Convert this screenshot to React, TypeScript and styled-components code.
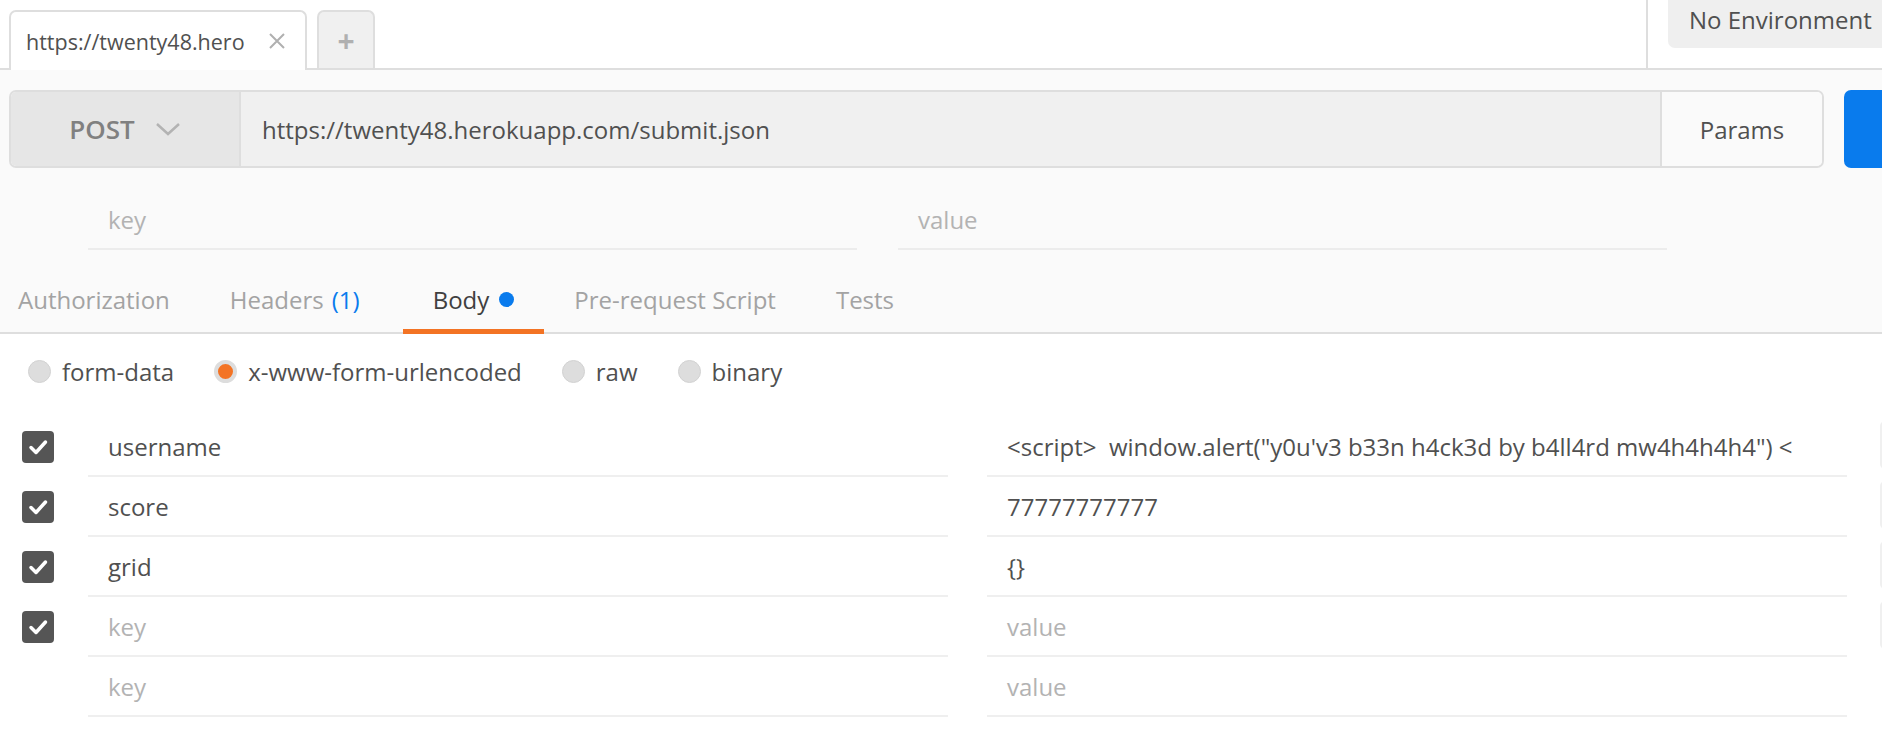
import styled, { createGlobalStyle } from 'styled-components';

const GlobalStyle = createGlobalStyle`
    html, body {
        margin: 0;
        padding: 0;
        background: #fafafa;
        font-family: "Open Sans", "Liberation Sans", sans-serif;
        overflow: hidden;
    }
    * { box-sizing: border-box; }
`;

type Row = { key: string; value: string; checked: boolean; placeholder?: boolean };

const rows: Row[] = [
    { key: 'username', value: '<script>  window.alert("y0u\'v3 b33n h4ck3d by b4ll4rd mw4h4h4h4") <', checked: true },
    { key: 'score', value: '77777777777', checked: true },
    { key: 'grid', value: '{}', checked: true },
    { key: 'key', value: 'value', checked: true, placeholder: true },
    { key: 'key', value: 'value', checked: false, placeholder: true },
];

const tabs = ['Authorization', 'Headers', 'Body', 'Pre-request Script', 'Tests'];
const bodyModes = ['form-data', 'x-www-form-urlencoded', 'raw', 'binary'];

const App = () => {
    return (
        <Page>
            <GlobalStyle />
            <TabBar>
                <RequestTab>
                    <TabTitle>https://twenty48.hero</TabTitle>
                    <svg width="18" height="18" viewBox="0 0 18 18">
                        <path d="M2 2 L16 16 M16 2 L2 16" stroke="#b0b0b0" strokeWidth="2" fill="none" />
                    </svg>
                </RequestTab>
                <AddTab>+</AddTab>
                <Spacer />
                <EnvArea>
                    <EnvSelect>No Environment</EnvSelect>
                </EnvArea>
            </TabBar>

            <UrlRow>
                <UrlBar>
                    <Method>
                        <span>POST</span>
                        <svg width="26" height="14" viewBox="0 0 26 14">
                            <polyline points="2,2 13,12 24,2" stroke="#b3b3b3" strokeWidth="2.5" fill="none" />
                        </svg>
                    </Method>
                    <UrlInput>https://twenty48.herokuapp.com/submit.json</UrlInput>
                    <ParamsButton>Params</ParamsButton>
                </UrlBar>
                <SendButton>Send</SendButton>
            </UrlRow>

            <ParamRow>
                <ParamCell>key</ParamCell>
                <ParamCell>value</ParamCell>
            </ParamRow>

            <TabsRow>
                {tabs.map((t) => (
                    <TabItem key={t} $active={t === 'Body'}>
                        {t}
                        {t === 'Headers' && <Count>(1)</Count>}
                        {t === 'Body' && <Dot />}
                    </TabItem>
                ))}
            </TabsRow>

            <BodyPanel>
                <RadioRow>
                    {bodyModes.map((m) => (
                        <RadioItem key={m}>
                            <Radio $on={m === 'x-www-form-urlencoded'} />
                            {m}
                        </RadioItem>
                    ))}
                </RadioRow>
                <Table>
                    {rows.map((r, i) => (
                        <DataRow key={i}>
                            <CheckCell>
                                {r.checked && (
                                    <CheckBox>
                                        <svg width="32" height="32" viewBox="0 0 32 32">
                                            <polyline points="9,16.5 14,21.5 23.5,11" stroke="#fff" strokeWidth="3.5" fill="none" strokeLinecap="round" strokeLinejoin="round" />
                                        </svg>
                                    </CheckBox>
                                )}
                            </CheckCell>
                            <Cell $muted={r.placeholder}>{r.key}</Cell>
                            <Cell $muted={r.placeholder}>{r.value}</Cell>
                            {i < 4 && <RowEdge />}
                        </DataRow>
                    ))}
                </Table>
            </BodyPanel>
        </Page>
    );
};
export default App;

const Page = styled.div`
    width: 1882px;
    height: 730px;
    overflow: hidden;
    background: #fafafa;
    color: #505050;
    font-size: 24px;
`;

const TabBar = styled.div`
    height: 70px;
    display: flex;
    align-items: flex-end;
    padding-left: 9px;
    background: #fff;
    border-bottom: 2px solid #dedede;
`;

const RequestTab = styled.div`
    width: 298px;
    height: 60px;
    margin-bottom: -2px;
    flex-shrink: 0;
    display: flex;
    align-items: center;
    justify-content: space-between;
    padding: 0 19px 0 15px;
    background: #fff;
    border: 2px solid #dedede;
    border-bottom: none;
    border-radius: 7px 7px 0 0;
`;

const TabTitle = styled.span`
    font-size: 21.5px;
    color: #505050;
`;

const AddTab = styled.div`
    width: 58px;
    height: 58px;
    margin-left: 10px;
    flex-shrink: 0;
    display: flex;
    align-items: center;
    justify-content: center;
    background: #f0f0f0;
    border: 2px solid #dedede;
    border-bottom: none;
    border-radius: 7px 7px 0 0;
    color: #b0b0b0;
    font-size: 30px;
    font-weight: 700;
`;

const Spacer = styled.div`
    flex: 1;
`;

const EnvArea = styled.div`
    align-self: stretch;
    flex-shrink: 0;
    border-left: 2px solid #dedede;
    padding-left: 20px;
    width: 236px;
`;

const EnvSelect = styled.div`
    height: 58px;
    margin-top: -10px;
    display: flex;
    align-items: center;
    padding-left: 21px;
    background: #efefef;
    border-radius: 0 0 0 7px;
    white-space: nowrap;
    color: #505050;
`;

const UrlRow = styled.div`
    display: flex;
    margin-top: 20px;
    padding-left: 9px;
    height: 78px;
`;

const UrlBar = styled.div`
    width: 1815px;
    flex-shrink: 0;
    display: flex;
    border: 2px solid #dedede;
    border-radius: 7px;
    overflow: hidden;
`;

const Method = styled.div`
    width: 230px;
    flex-shrink: 0;
    display: flex;
    align-items: center;
    justify-content: center;
    gap: 20px;
    background: #e6e6e6;
    border-right: 2px solid #dedede;
    font-size: 26px;
    font-weight: 600;
    color: #808080;
`;

const UrlInput = styled.div`
    flex: 1;
    display: flex;
    align-items: center;
    padding-left: 21px;
    background: #f0f0f0;
    color: #505050;
`;

const ParamsButton = styled.div`
    width: 162px;
    flex-shrink: 0;
    display: flex;
    align-items: center;
    justify-content: center;
    background: #fafafa;
    border-left: 2px solid #dedede;
    color: #505050;
`;

const SendButton = styled.div`
    margin-left: 20px;
    width: 150px;
    flex-shrink: 0;
    display: flex;
    align-items: center;
    justify-content: center;
    background: #097bed;
    border-radius: 7px;
    color: #fff;
    font-weight: 600;
`;

const ParamRow = styled.div`
    display: flex;
    gap: 41px;
    padding-left: 88px;
    margin-top: 22px;
`;

const ParamCell = styled.div`
    width: 769px;
    height: 60px;
    flex-shrink: 0;
    display: flex;
    align-items: center;
    padding-left: 20px;
    border-bottom: 2px solid #ececec;
    color: #b3b3b3;
`;

const TabsRow = styled.div`
    display: flex;
    margin-top: 14px;
    margin-left: -12px;
    border-bottom: 2px solid #dedede;
`;

const TabItem = styled.div<{ $active?: boolean }>`
    height: 70px;
    display: flex;
    align-items: center;
    padding: 0 30px;
    color: ${(p) => (p.$active ? '#404040' : '#a3a3a3')};
    border-bottom: 5px solid ${(p) => (p.$active ? '#f37324' : 'transparent')};
    margin-bottom: -2px;
    padding-top: 5px;
`;

const Count = styled.span`
    margin-left: 8px;
    margin-right: 13px;
    color: #097bed;
`;

const Dot = styled.span`
    width: 15px;
    height: 15px;
    margin-left: 10px;
    border-radius: 50%;
    background: #097bed;
`;

const BodyPanel = styled.div`
    background: #fff;
    height: 400px;
`;

const RadioRow = styled.div`
    height: 74px;
    display: flex;
    align-items: center;
    padding-left: 28px;
    gap: 40px;
`;

const RadioItem = styled.div`
    display: flex;
    align-items: center;
    gap: 11px;
    color: #505050;
`;

const Radio = styled.span<{ $on?: boolean }>`
    width: 23px;
    height: 23px;
    border-radius: 50%;
    background: ${(p) => (p.$on ? '#f37324' : '#dddddd')};
    border: ${(p) => (p.$on ? '4px solid #dddddd' : '1px solid #d2d2d2')};
`;

const Table = styled.div`
    margin-top: 9px;
`;

const DataRow = styled.div`
    display: flex;
    height: 60px;
`;

const CheckCell = styled.div`
    width: 88px;
    flex-shrink: 0;
    display: flex;
    align-items: center;
    padding-left: 22px;
`;

const CheckBox = styled.div`
    width: 32px;
    height: 32px;
    border-radius: 4px;
    background: #555555;
    display: flex;
`;

const Cell = styled.div<{ $muted?: boolean }>`
    width: 860px;
    flex-shrink: 0;
    display: flex;
    align-items: center;
    padding-left: 20px;
    border-bottom: 2px solid #efefef;
    color: ${(p) => (p.$muted ? '#b3b3b3' : '#505050')};
    white-space: pre;
    overflow: hidden;
    & + & {
        margin-left: 39px;
    }
`;

const RowEdge = styled.div`
    flex-shrink: 0;
    margin: 4px 0 8px 33px;
    width: 40px;
    border: 2px solid #f0f0f0;
    border-radius: 5px;
`;
